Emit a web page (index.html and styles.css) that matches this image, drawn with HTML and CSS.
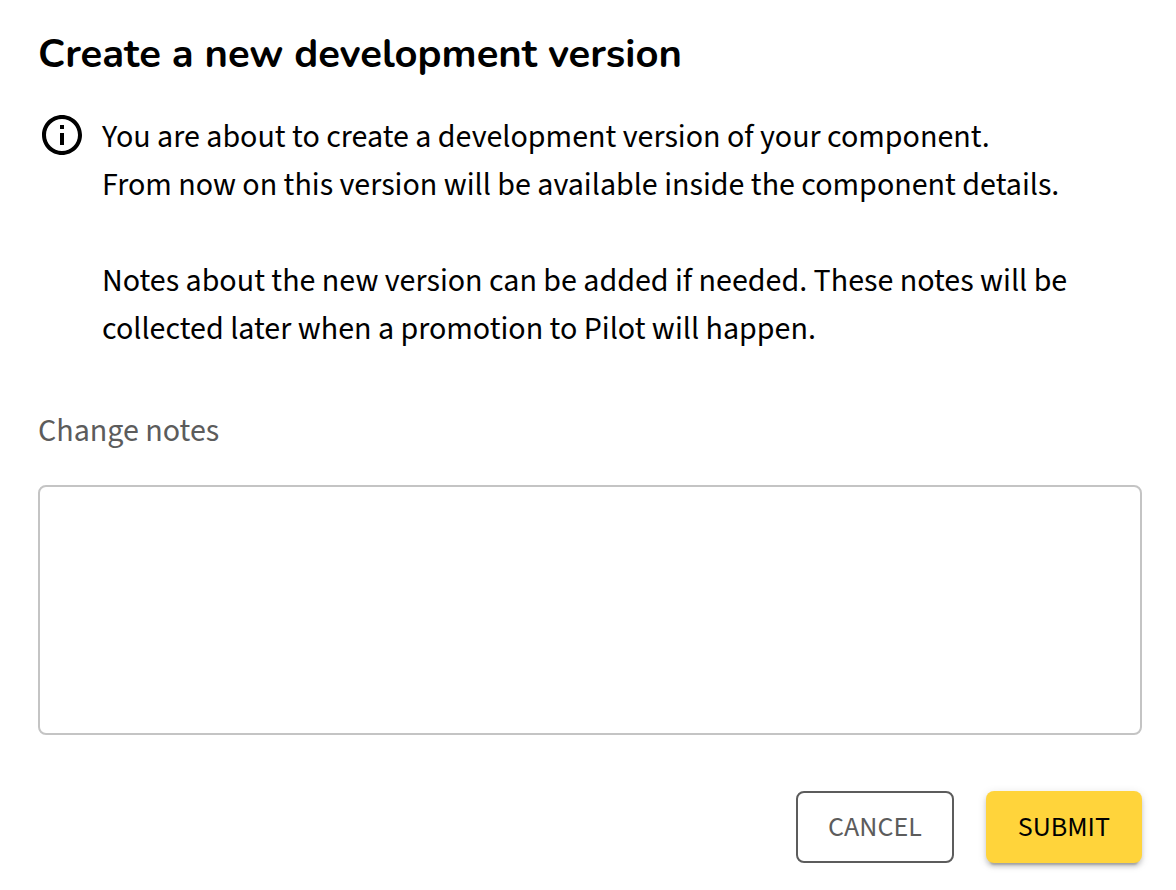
FILE: index.html
```html
<!DOCTYPE html>
<html lang="en">
<head>
    <meta charset="UTF-8">
    <meta name="viewport" content="width=device-width, initial-scale=1.0">
    <title>Create a new development version</title>
    <link rel="stylesheet" href="styles.css">
</head>
<body>
    <main class="dialog">
        <h1>Create a new development version</h1>
        <div class="info">
            <svg class="info-icon" viewBox="0 0 24 24" fill="currentColor" aria-hidden="true">
                <path d="M11 7h2v2h-2zm0 4h2v6h-2zm1-9C6.48 2 2 6.48 2 12s4.48 10 10 10 10-4.480 10-10S17.520 2 12 2zm0 18c-4.410 0-8-3.590-8-8s3.590-8 8-8 8 3.590 8 8-3.590 8-8 8z"/>
            </svg>
            <div class="info-text">
                <p>You are about to create a development version of your component.<br>From now on this version will be available inside the component details.</p>
                <p>Notes about the new version can be added if needed. These notes will be collected later when a promotion to Pilot will happen.</p>
            </div>
        </div>
        <form id="version-form">
            <label for="change-notes">Change notes</label>
            <textarea id="change-notes" name="change-notes" rows="5"></textarea>
            <div class="button-group">
                <button type="button" class="btn btn-secondary">CANCEL</button>
                <button type="submit" class="btn btn-primary">SUBMIT</button>
            </div>
        </form>
    </main>
</body>
</html>
```
FILE: styles.css
```css
:root {
    --primary-color: #ffd43b;
    --text-color: #000;
    --muted-color: #5c5c5c;
    --border-color: #c4c4c4;
}
* {
    box-sizing: border-box;
}
body {
    margin: 0;
    font-family: "Source Sans 3", "Noto Sans CJK SC", sans-serif;
    font-size: 32px;
    line-height: 48px;
    background-color: #fff;
    color: var(--text-color);
}
.dialog {
    padding: 30px 34px 24px 38px;
}
h1 {
    margin: 0 0 33px;
    font-family: Nunito, Lato, sans-serif;
    font-size: 40px;
    font-weight: 700;
    line-height: 48px;
}
.info {
    display: flex;
    gap: 16px;
    margin-bottom: 54px;
}
.info-icon {
    flex: none;
    width: 48px;
    height: 48px;
}
.info-text {
    padding-top: 2px;
}
.info-text p {
    margin: 0 0 48px;
}
.info-text p:last-child {
    margin-bottom: 0;
}
label {
    display: block;
    margin-bottom: 30px;
    color: var(--muted-color);
}
textarea {
    display: block;
    width: 100%;
    height: 250px;
    padding: 16px;
    border: 2px solid var(--border-color);
    border-radius: 8px;
    font: inherit;
    resize: none;
}
textarea:focus {
    outline: none;
    border-color: var(--muted-color);
}
.button-group {
    display: flex;
    justify-content: flex-end;
    gap: 32px;
    margin-top: 56px;
}
.btn {
    height: 72px;
    padding: 0 32px;
    border: none;
    border-radius: 8px;
    font-family: inherit;
    font-size: 28px;
    line-height: 48px;
    cursor: pointer;
}
.btn-secondary {
    padding: 0 30px;
    border: 2px solid var(--muted-color);
    background-color: #fff;
    color: var(--muted-color);
}
.btn-primary {
    background-color: var(--primary-color);
    color: var(--text-color);
    box-shadow: 0 6px 2px -4px rgba(0,0,0,0.2), 0 4px 4px 0 rgba(0,0,0,0.14), 0 2px 10px 0 rgba(0,0,0,0.12);
}
```
